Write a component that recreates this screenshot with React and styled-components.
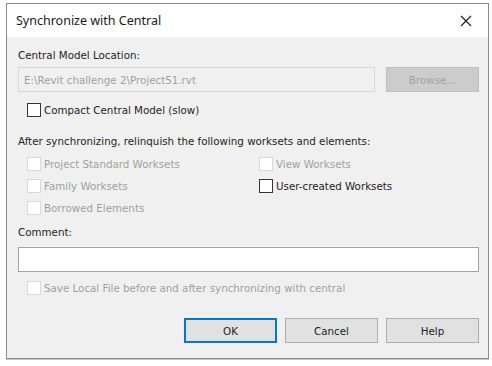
import React from "react";
import styled, { createGlobalStyle } from "styled-components";

const GlobalStyle = createGlobalStyle`
  html, body {
    margin: 0;
    padding: 0;
    background: #ffffff;
  }
  body {
    font-family: "DejaVu Sans", "Noto Sans", sans-serif;
  }
`;

const Page = styled.div`
  width: 492px;
  height: 366px;
  padding: 3px 0 0 6px;
  box-sizing: border-box;
`;

const Window = styled.div`
  width: 483px;
  height: 356px;
  box-sizing: border-box;
  border: 1px solid #8c8c8c;
  box-shadow: 0 1px 0 #c4c4c4;
  background: #f0f0f0;
  display: flex;
  flex-direction: column;
`;

const TitleBar = styled.div`
  height: 33px;
  background: #ffffff;
  display: flex;
  align-items: center;
  justify-content: space-between;
  padding: 0 16px 0 9px;
`;

const Title = styled.span`
  font-family: "Noto Sans", "Open Sans", sans-serif;
  font-size: 12.5px;
  color: #1a1a1a;
`;

const CloseButton = styled.button`
  border: none;
  background: none;
  padding: 0;
  width: 12px;
  height: 12px;
  display: flex;
`;

const Body = styled.div`
  flex: 1;
  padding: 11px 9px 0 11px;
  font-family: "DejaVu Sans", sans-serif;
  font-size: 10.3px;
  color: #1e1e1e;
`;

const Label = styled.div`
  height: 14px;
  line-height: 14px;
  margin-bottom: ${(p) => p.$gap || 0}px;
`;

const PathRow = styled.div`
  display: flex;
  gap: 11px;
  margin-top: 5px;
`;

const TextField = styled.div`
  box-sizing: border-box;
  height: 25px;
  flex: ${(p) => (p.$grow ? 1 : "none")};
  width: ${(p) => (p.$grow ? "auto" : "100%")};
  border: 1px solid ${(p) => (p.$disabled ? "#d9d9d9" : "#a5a5a5")};
  background: ${(p) => (p.$disabled ? "#f0f0f0" : "#ffffff")};
  color: #a0a0a0;
  padding: 0 5px;
  display: flex;
  align-items: center;
`;

const Button = styled.button`
  box-sizing: border-box;
  width: 93px;
  height: 25px;
  font-family: "DejaVu Sans", sans-serif;
  font-size: 10.3px;
  padding: 0;
  color: ${(p) => (p.disabled ? "#a3a3a3" : "#1e1e1e")};
  background: ${(p) => (p.disabled ? "#cccccc" : "#e1e1e1")};
  border: ${(p) => (p.$primary ? "2px solid #0078d7" : p.disabled ? "1px solid #bfbfbf" : "1px solid #adadad")};
`;

const CheckRow = styled.label`
  display: flex;
  align-items: center;
  gap: 3px;
  height: 14px;
  padding-left: 9px;
  color: ${(p) => (p.$disabled ? "#a0a0a0" : "#1e1e1e")};
`;

const Box = styled.span`
  box-sizing: border-box;
  width: 14px;
  height: 14px;
  flex: none;
  background: #ffffff;
  border: 1px solid ${(p) => (p.$disabled ? "#dadada" : "#333333")};
`;

const Options = styled.div`
  display: grid;
  grid-template-columns: 232px 1fr;
  row-gap: 8px;
  margin-top: 9px;
`;

const Section = styled.div`
  margin-top: ${(p) => p.$top}px;
`;

const ButtonBar = styled.div`
  display: flex;
  justify-content: flex-end;
  gap: 8px;
  margin-top: 23px;
`;

const Check = ({ label, disabled }) => (
  <CheckRow $disabled={disabled}>
    <Box $disabled={disabled} />
    {label}
  </CheckRow>
);

export default function App() {
  return (
    <>
      <GlobalStyle />
      <Page>
        <Window>
          <TitleBar>
            <Title>Synchronize with Central</Title>
            <CloseButton aria-label="Close">
              <svg width="12" height="12" viewBox="0 0 12 12">
                <path d="M1 1L11 11M11 1L1 11" stroke="#1a1a1a" strokeWidth="1.1" />
              </svg>
            </CloseButton>
          </TitleBar>
          <Body>
            <Label>Central Model Location:</Label>
            <PathRow>
              <TextField $grow $disabled>E:\Revit challenge 2\Project51.rvt</TextField>
              <Button disabled>Browse...</Button>
            </PathRow>
            <Section $top={11}>
              <Check label="Compact Central Model (slow)" />
            </Section>
            <Section $top={17}>
              <Label>After synchronizing, relinquish the following worksets and elements:</Label>
              <Options>
                <Check label="Project Standard Worksets" disabled />
                <Check label="View Worksets" disabled />
                <Check label="Family Worksets" disabled />
                <Check label="User-created Worksets" />
                <Check label="Borrowed Elements" disabled />
              </Options>
            </Section>
            <Section $top={10}>
              <Label $gap={8}>Comment:</Label>
              <TextField />
            </Section>
            <Section $top={9}>
              <Check label="Save Local File before and after synchronizing with central" disabled />
            </Section>
            <ButtonBar>
              <Button $primary>OK</Button>
              <Button>Cancel</Button>
              <Button>Help</Button>
            </ButtonBar>
          </Body>
        </Window>
      </Page>
    </>
  );
}
